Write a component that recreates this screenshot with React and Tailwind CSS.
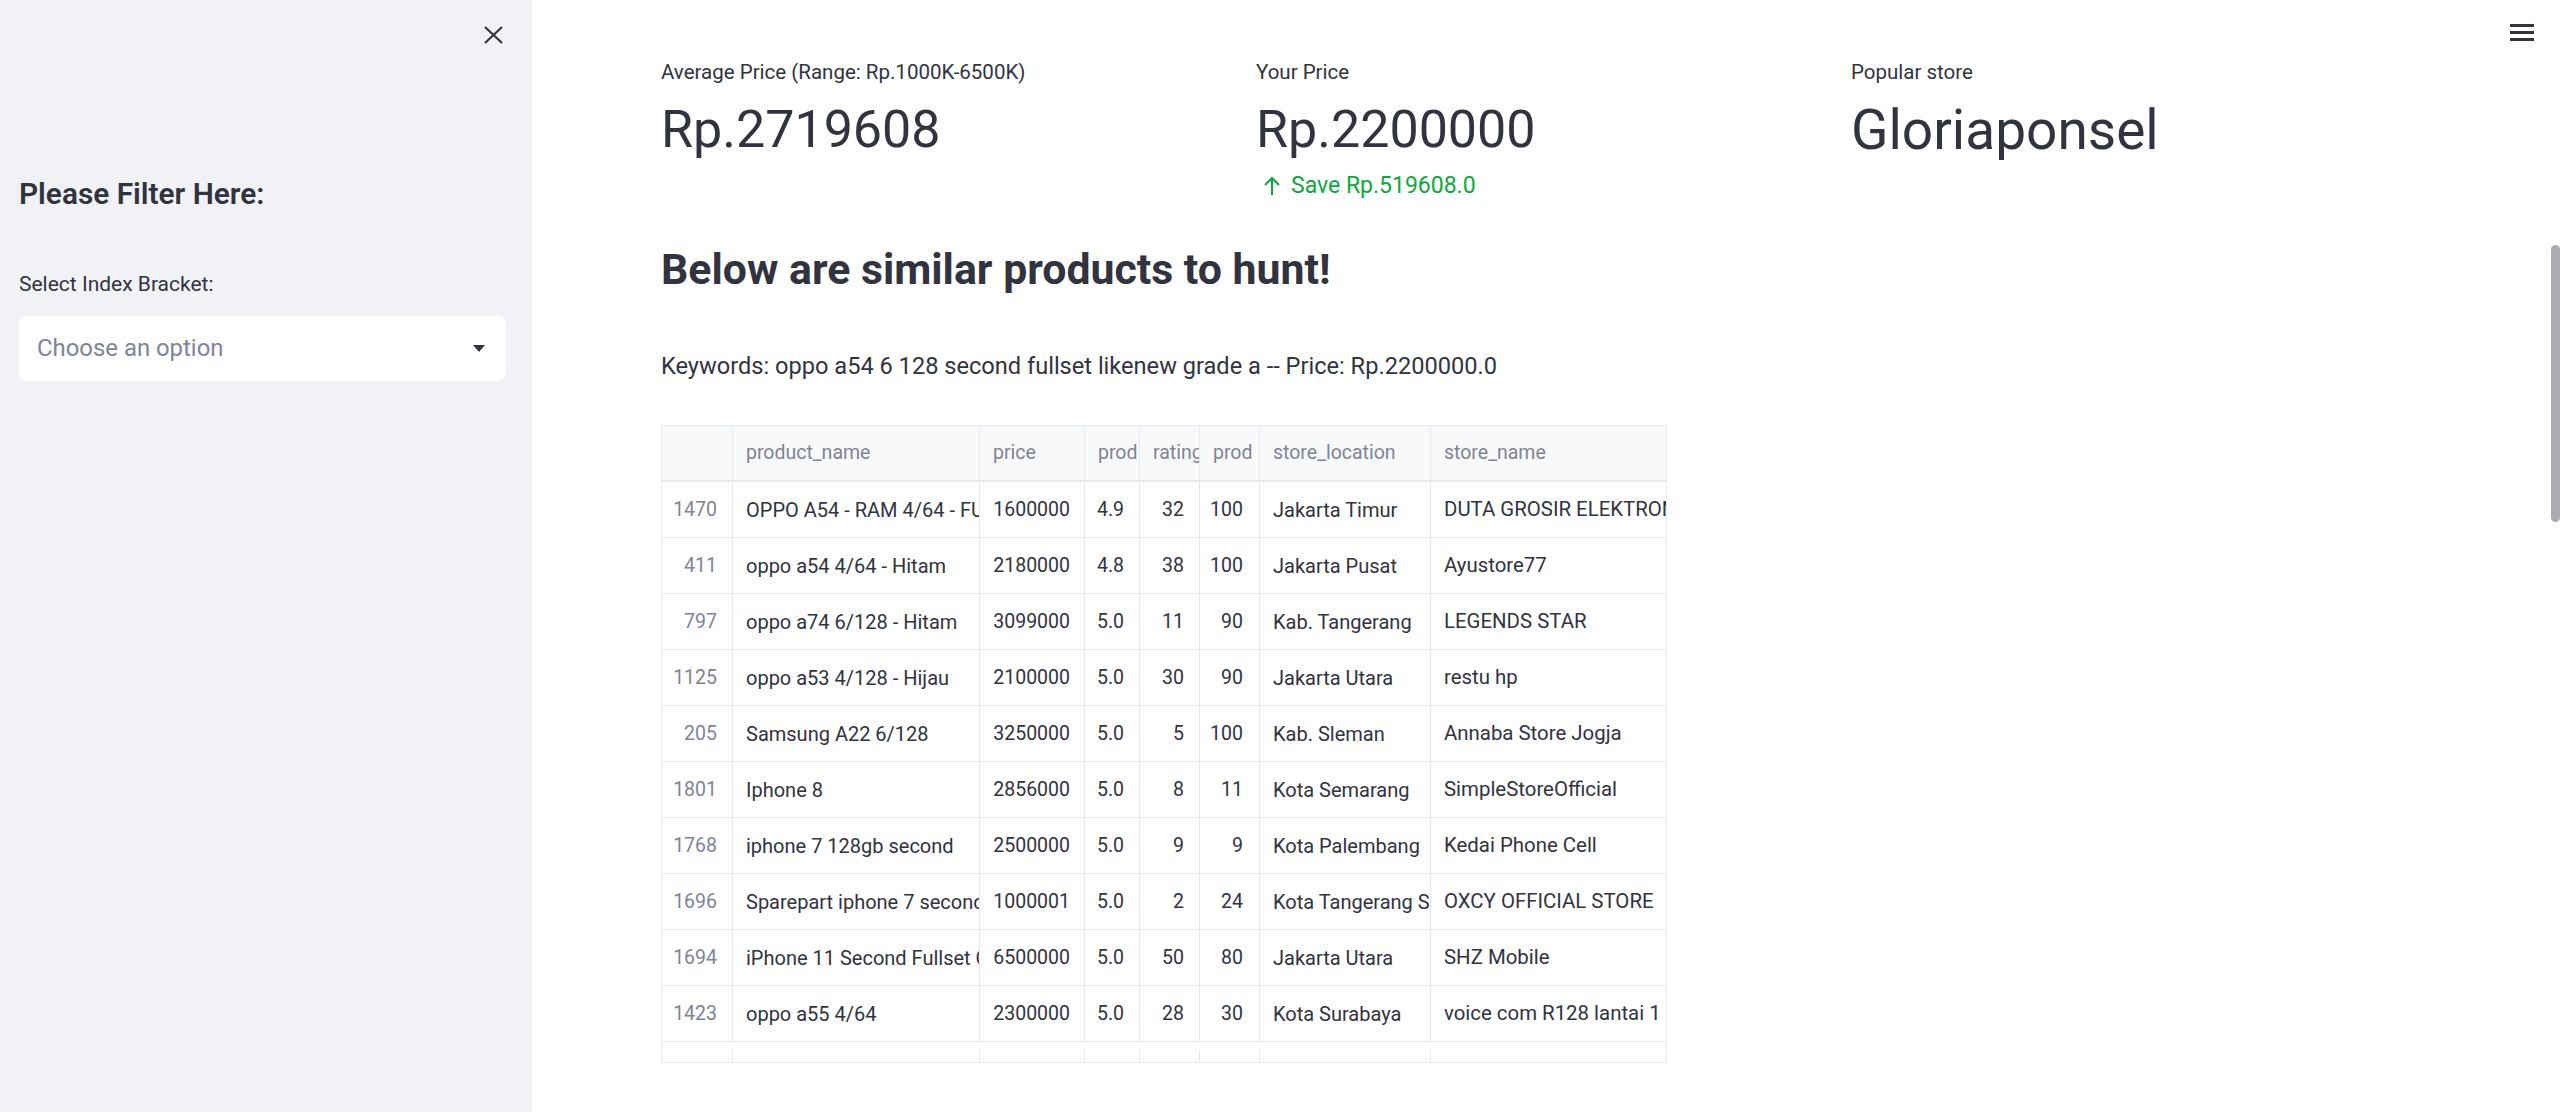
const rows = [
  ['1470', 'OPPO A54 - RAM 4/64 - FULLSET ORIGINAL', '1600000', '4.9', '32', '100', 'Jakarta Timur', 'DUTA GROSIR ELEKTRONIK'],
  ['411', 'oppo a54 4/64 - Hitam', '2180000', '4.8', '38', '100', 'Jakarta Pusat', 'Ayustore77'],
  ['797', 'oppo a74 6/128 - Hitam', '3099000', '5.0', '11', '90', 'Kab. Tangerang', 'LEGENDS STAR'],
  ['1125', 'oppo a53 4/128 - Hijau', '2100000', '5.0', '30', '90', 'Jakarta Utara', 'restu hp'],
  ['205', 'Samsung A22 6/128', '3250000', '5.0', '5', '100', 'Kab. Sleman', 'Annaba Store Jogja'],
  ['1801', 'Iphone 8', '2856000', '5.0', '8', '11', 'Kota Semarang', 'SimpleStoreOfficial'],
  ['1768', 'iphone 7 128gb second', '2500000', '5.0', '9', '9', 'Kota Palembang', 'Kedai Phone Cell'],
  ['1696', 'Sparepart iphone 7 second mesin', '1000001', '5.0', '2', '24', 'Kota Tangerang Selatan', 'OXCY OFFICIAL STORE'],
  ['1694', 'iPhone 11 Second Fullset Original', '6500000', '5.0', '50', '80', 'Jakarta Utara', 'SHZ Mobile'],
  ['1423', 'oppo a55 4/64', '2300000', '5.0', '28', '30', 'Kota Surabaya', 'voice com R128 lantai 1'],
  ['1311', 'oppo a54 ram 4/64 fullset', '2250000', '5.0', '14', '40', 'Kota Bekasi', 'Bintang Cell'],
];

const cols = [
  { name: '', w: 'w-[71px]', align: 'justify-end pr-[15px] text-[#808495]' },
  { name: 'product_name', w: 'w-[247px]', align: 'pl-[13px] text-[20px]' },
  { name: 'price', w: 'w-[105px]', align: 'justify-end pr-[14px]' },
  { name: 'prod', w: 'w-[55px]', align: 'justify-end pr-[15px]' },
  { name: 'rating', w: 'w-[60px]', align: 'justify-end pr-[15px]' },
  { name: 'prod', w: 'w-[60px]', align: 'justify-end pr-[16px]' },
  { name: 'store_location', w: 'w-[171px]', align: 'pl-[13px] text-[20px]' },
  { name: 'store_name', w: 'w-[260px]', align: 'pl-[13px] text-[20.4px]' },
];

function Metric({ label, value, valueSize = 'text-[52px]', delta }) {
  return (
    <div>
      <div className="text-[20.5px] leading-[24px] text-[#31333f] whitespace-nowrap">{label}</div>
      <div className={`mt-[20px] ${valueSize} leading-[52px] text-[#31333f] whitespace-nowrap`}>{value}</div>
      {delta && (
        <div className="mt-[16px] flex items-center text-[23px] leading-[28px] text-[#09ab3b]">
          <svg width="20" height="20" viewBox="0 0 20 20" className="ml-[6px] mr-[9px]" fill="none" stroke="currentColor" strokeWidth="2">
            <path d="M10 19V2M3 9l7-7 7 7" />
          </svg>
          {delta}
        </div>
      )}
    </div>
  );
}

export default function App() {
  return (
    <div className="flex w-full h-[1112px] overflow-hidden bg-white font-['Roboto','Liberation_Sans',sans-serif] text-[#31333f]">
      <aside className="w-[532px] shrink-0 bg-[#f0f2f6] px-[19px] relative">
        <button className="absolute left-[484px] top-[26px] text-[#31333f]">
          <svg width="19" height="18" viewBox="0 0 19 18" stroke="currentColor" strokeWidth="2.2" fill="none">
            <path d="M1 1l17 16M18 1L1 17" />
          </svg>
        </button>
        <h3 className="pt-[176px] text-[29.8px] leading-[36px] font-semibold">Please Filter Here:</h3>
        <div className="mt-[59px] text-[21px] leading-[26px]">Select Index Bracket:</div>
        <div className="mt-[19px] h-[65px] w-[487px] bg-white rounded-[8px] flex items-center justify-between pl-[18px] pr-[21px]">
          <span className="text-[23.9px] text-[#808495]">Choose an option</span>
          <svg width="12" height="7" viewBox="0 0 12 7" fill="#31333f">
            <path d="M0 0h12L6 7z" />
          </svg>
        </div>
      </aside>

      <main className="flex-1 relative pl-[129px] pr-[130px] pt-[60px]">
        <button className="absolute right-[26px] top-[24px] flex flex-col gap-[4.5px]">
          <span className="block w-[24px] h-[2.5px] bg-[#31333f]" />
          <span className="block w-[24px] h-[2.5px] bg-[#31333f]" />
          <span className="block w-[24px] h-[2.5px] bg-[#31333f]" />
        </button>
        <div className="absolute right-0 top-[245px] w-[9px] h-[277px] rounded-full bg-[#acacb2]" />

        <div className="grid grid-cols-3 gap-x-4">
          <Metric label="Average Price (Range: Rp.1000K-6500K)" value="Rp.2719608" />
          <Metric label="Your Price" value="Rp.2200000" delta="Save Rp.519608.0" />
          <Metric label="Popular store" value="Gloriaponsel" valueSize="text-[55px]" />
        </div>

        <h3 className="mt-[45px] text-[42.8px] leading-[48px] font-bold">Below are similar products to hunt!</h3>

        <p className="mt-[57px] text-[23.6px] leading-[32px] whitespace-nowrap">
          Keywords: oppo a54 6 128 second fullset likenew grade a -- Price: Rp.2200000.0
        </p>

        <div className="mt-[43px] w-[1006px] h-[638px] border border-[#e6e9ef] overflow-hidden text-[19.5px]">
          <div className="flex h-[56px] bg-[#f8f9fb] border-b-2 border-[#e6e9ef] text-[#808495]">
            {cols.map((c, i) => (
              <div key={i} className={`${c.w} shrink-0 h-full flex items-center overflow-hidden whitespace-nowrap border-r border-[#e6e9ef] pl-[13px]`}>
                {c.name}
              </div>
            ))}
          </div>
          {rows.map((r, ri) => (
            <div key={ri} className={`flex h-[56px] border-b border-[#e6e9ef] ${ri === rows.length - 1 ? 'pt-[8px]' : ''}`}>
              {r.map((v, i) => (
                <div key={i} className={`${cols[i].w} ${cols[i].align} shrink-0 h-full flex items-center overflow-hidden whitespace-nowrap border-r border-[#e6e9ef]`}>
                  {v}
                </div>
              ))}
            </div>
          ))}
        </div>
      </main>
    </div>
  );
}
